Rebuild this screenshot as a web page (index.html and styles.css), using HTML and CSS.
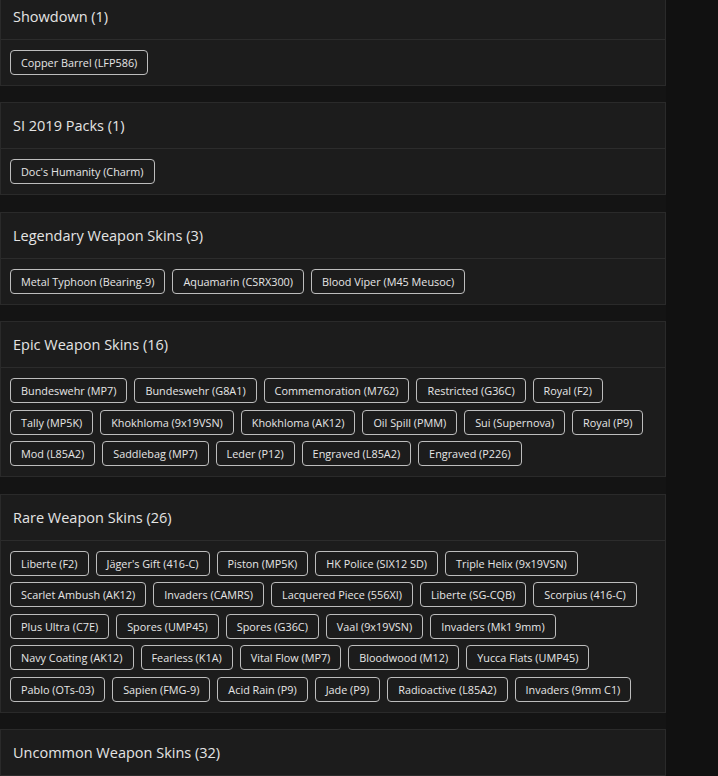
FILE: index.html
```html
<!DOCTYPE html>
<html lang="en">
<head>
  <meta charset="UTF-8" />
  <meta name="viewport" content="width=device-width, initial-scale=1.0"/>
  <title>Unlocks</title>
  <link rel="stylesheet" href="styles.css">
</head>
<body>

  <div class="page">
    <div class="panel">
      <div class="panel-head">Showdown (1)</div>
      <div class="panel-body">
        <span class="tag">Copper Barrel (LFP586)</span>
      </div>
    </div>

    <div class="panel">
      <div class="panel-head">SI 2019 Packs (1)</div>
      <div class="panel-body">
        <span class="tag">Doc's Humanity (Charm)</span>
      </div>
    </div>

    <div class="panel">
      <div class="panel-head">Legendary Weapon Skins (3)</div>
      <div class="panel-body">
        <span class="tag">Metal Typhoon (Bearing-9)</span>
        <span class="tag">Aquamarin (CSRX300)</span>
        <span class="tag">Blood Viper (M45 Meusoc)</span>
      </div>
    </div>

    <div class="panel">
      <div class="panel-head">Epic Weapon Skins (16)</div>
      <div class="panel-body">
        <span class="tag">Bundeswehr (MP7)</span>
        <span class="tag">Bundeswehr (G8A1)</span>
        <span class="tag">Commemoration (M762)</span>
        <span class="tag">Restricted (G36C)</span>
        <span class="tag">Royal (F2)</span>
        <span class="tag">Tally (MP5K)</span>
        <span class="tag">Khokhloma (9x19VSN)</span>
        <span class="tag">Khokhloma (AK12)</span>
        <span class="tag">Oil Spill (PMM)</span>
        <span class="tag">Sui (Supernova)</span>
        <span class="tag">Royal (P9)</span>
        <span class="tag">Mod (L85A2)</span>
        <span class="tag">Saddlebag (MP7)</span>
        <span class="tag">Leder (P12)</span>
        <span class="tag">Engraved (L85A2)</span>
        <span class="tag">Engraved (P226)</span>
      </div>
    </div>

    <div class="panel">
      <div class="panel-head">Rare Weapon Skins (26)</div>
      <div class="panel-body">
        <span class="tag">Liberte (F2)</span>
        <span class="tag">Jäger's Gift (416-C)</span>
        <span class="tag">Piston (MP5K)</span>
        <span class="tag">HK Police (SIX12 SD)</span>
        <span class="tag">Triple Helix (9x19VSN)</span>
        <span class="tag">Scarlet Ambush (AK12)</span>
        <span class="tag">Invaders (CAMRS)</span>
        <span class="tag">Lacquered Piece (556XI)</span>
        <span class="tag">Liberte (SG-CQB)</span>
        <span class="tag">Scorpius (416-C)</span>
        <span class="tag">Plus Ultra (C7E)</span>
        <span class="tag">Spores (UMP45)</span>
        <span class="tag">Spores (G36C)</span>
        <span class="tag">Vaal (9x19VSN)</span>
        <span class="tag">Invaders (Mk1 9mm)</span>
        <span class="tag">Navy Coating (AK12)</span>
        <span class="tag">Fearless (K1A)</span>
        <span class="tag">Vital Flow (MP7)</span>
        <span class="tag">Bloodwood (M12)</span>
        <span class="tag">Yucca Flats (UMP45)</span>
        <span class="tag">Pablo (OTs-03)</span>
        <span class="tag">Sapien (FMG-9)</span>
        <span class="tag">Acid Rain (P9)</span>
        <span class="tag">Jade (P9)</span>
        <span class="tag">Radioactive (L85A2)</span>
        <span class="tag">Invaders (9mm C1)</span>
      </div>
    </div>

    <div class="panel">
      <div class="panel-head">Uncommon Weapon Skins (32)</div>
      <div class="panel-body">
        <span class="tag">Hell Hound (P90)</span>
      </div>
    </div>
  </div>

</body>
</html>
```

FILE: styles.css
```css
html, body {
  margin: 0;
  height: 100%;
  overflow: hidden;
}

body {
  font-family: "Open Sans", Arial, sans-serif;
  background: #111111;
  color: #e4e4e4;
}

.page {
  width: 666px;
  min-height: 100%;
  background: #141414;
}

.panel {
  background: #1c1c1c;
  border: 1px solid #2a2a2a;
  margin-bottom: 16.5px;
}

.panel:first-child {
  margin-top: -7.5px;
}

.panel-head {
  height: 45px;
  line-height: 45px;
  padding: 0 12px;
  font-size: 14.5px;
  border-bottom: 1px solid #2c2c2c;
}

.panel-body {
  display: flex;
  flex-wrap: wrap;
  gap: 6.5px 7px;
  padding: 10px 9px;
}

.tag {
  display: inline-block;
  height: 25px;
  line-height: 23px;
  box-sizing: border-box;
  padding: 0 10px;
  font-size: 10.85px;
  border: 1px solid #bdbdbd;
  border-radius: 4px;
  color: #e6e6e6;
}
```
